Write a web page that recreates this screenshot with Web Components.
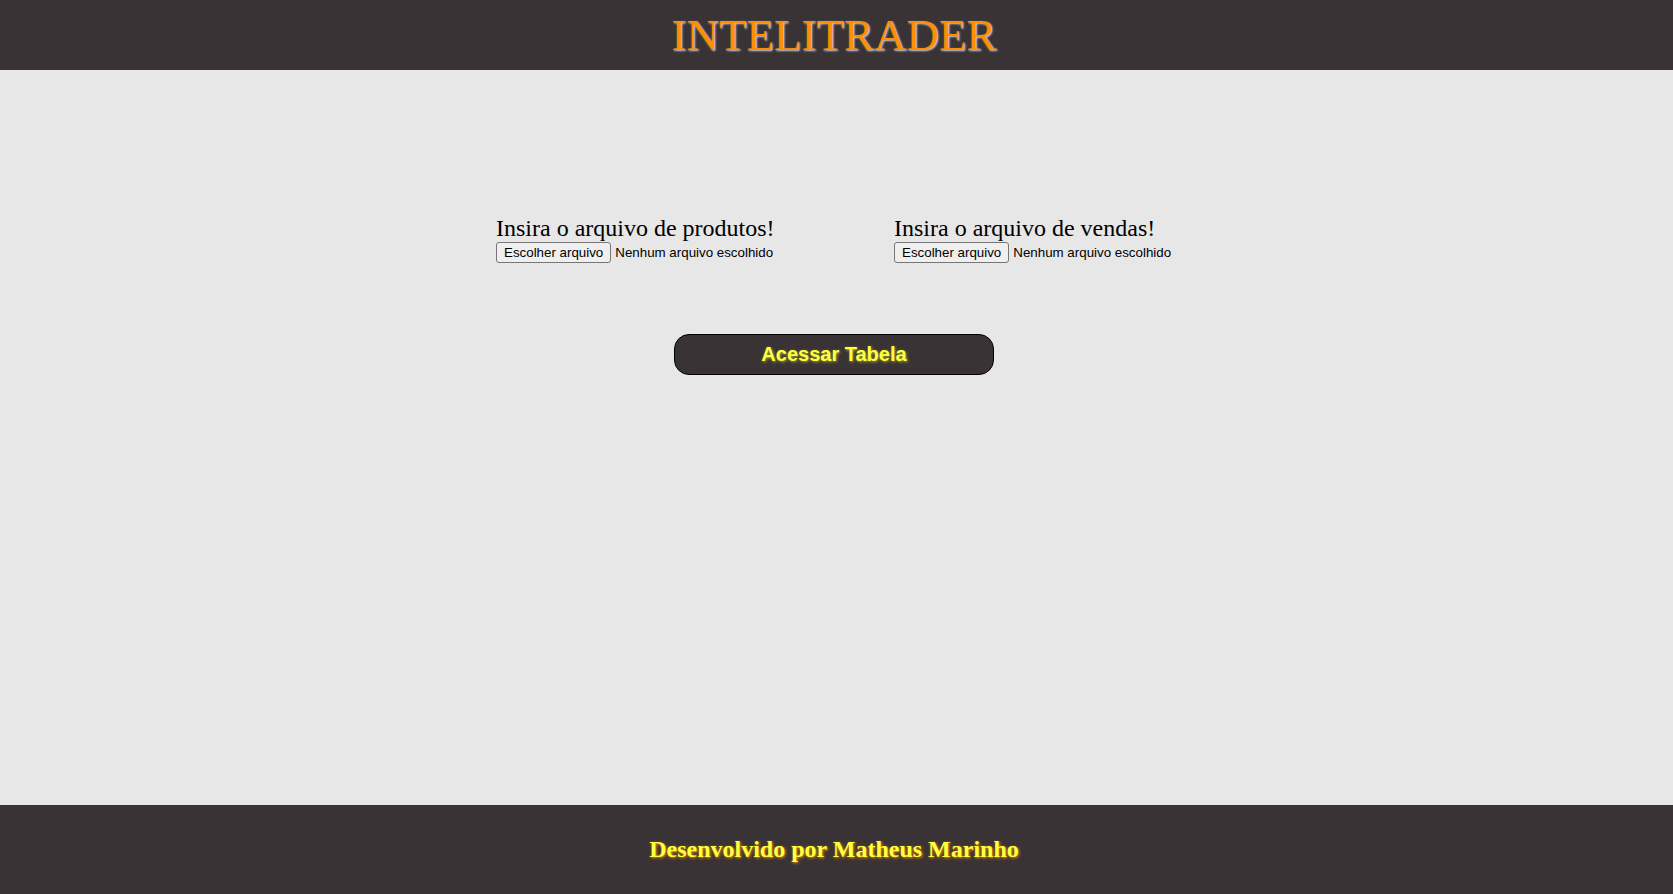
<!DOCTYPE html>
<html lang="pt-BR">
<head>
<meta charset="utf-8">
<meta name="viewport" content="width=device-width, initial-scale=1">
<title>Intelitrader</title>
<style>
  body { margin: 0; font-family: "Liberation Serif", "Times New Roman", serif; color: #000; background: #e7e7e7; --bar: #3a3335; --accent: #fd8f00; --highlight: #ffff3f; --gutter: 5px; }
</style>
</head>
<body>
<trader-page>
  <site-header slot="header">INTELITRADER</site-header>
  <upload-form>
    <file-picker name="produtos">Insira o arquivo de produtos!</file-picker>
    <file-picker name="vendas">Insira o arquivo de vendas!</file-picker>
    <action-button slot="action">Acessar Tabela</action-button>
  </upload-form>
  <site-footer slot="footer">Desenvolvido por Matheus Marinho</site-footer>
</trader-page>

<script>
class BaseElement extends HTMLElement {
  constructor() {
    super();
    this.attachShadow({ mode: "open" }).innerHTML = this.constructor.markup;
  }
}

customElements.define("trader-page", class extends BaseElement {
  static markup = `
    <style>
      :host { display: flex; flex-direction: column; min-height: 100vh; }
      main { flex: 1; padding: 144px var(--gutter) 0 0; }
    </style>
    <slot name="header"></slot>
    <main><slot></slot></main>
    <slot name="footer"></slot>`;
});

customElements.define("site-header", class extends BaseElement {
  static markup = `
    <style>
      :host { display: block; background: var(--bar); }
      header { display: flex; justify-content: center; padding: 10px var(--gutter) 10px 0; }
      h1 { margin: 0; font-size: 45px; line-height: 50px; font-weight: 400; color: var(--accent); text-shadow: 1px 1px 2px #d4d4e4; }
    </style>
    <header><h1><slot></slot></h1></header>`;
});

customElements.define("upload-form", class extends BaseElement {
  static markup = `
    <style>
      :host { display: block; }
      form { display: flex; flex-direction: column; align-items: center; gap: 71px; }
      .files { display: flex; flex-wrap: wrap; justify-content: center; gap: 32px 120px; }
    </style>
    <form>
      <div class="files"><slot></slot></div>
      <slot name="action"></slot>
    </form>`;
});

customElements.define("file-picker", class extends BaseElement {
  static markup = `
    <style>
      :host { display: block; width: 278px; }
      label { display: block; font-size: 24px; line-height: 28px; white-space: nowrap; }
      .row { position: relative; display: flex; align-items: center; gap: 4px; font: 10pt/15px "Liberation Sans", Arial, sans-serif; white-space: nowrap; }
      input { position: absolute; inset: 0; width: 100%; opacity: 0; pointer-events: none; }
      button { box-sizing: border-box; height: 21px; margin: 0; padding: 1px 7px; font: inherit; color: #000; background: #efefef; border: 1px solid #767676; border-radius: 3px; }
    </style>
    <label for="file"><slot></slot></label>
    <div class="row">
      <input id="file" type="file" tabindex="-1">
      <button type="button">Escolher arquivo</button>
      <output for="file">Nenhum arquivo escolhido</output>
    </div>`;
  connectedCallback() {
    const input = this.shadowRoot.querySelector("input");
    input.name = this.getAttribute("name");
    this.shadowRoot.querySelector("button").onclick = () => input.click();
    input.onchange = () => {
      this.shadowRoot.querySelector("output").textContent =
        input.files.length ? input.files[0].name : "Nenhum arquivo escolhido";
    };
  }
});

customElements.define("action-button", class extends BaseElement {
  static markup = `
    <style>
      :host { display: block; width: 320px; max-width: 100%; }
      button { width: 100%; margin: 0; padding: 8px; font: bold 20px/23px "Liberation Sans", Arial, sans-serif; color: var(--highlight); text-shadow: 1px 1px 3px #a8a830; background: var(--bar); border: 1px solid #000; border-radius: 15px; cursor: pointer; }
    </style>
    <button type="button"><slot></slot></button>`;
});

customElements.define("site-footer", class extends BaseElement {
  static markup = `
    <style>
      :host { display: block; background: var(--bar); }
      footer { display: flex; justify-content: center; padding: 30px var(--gutter) 31px 0; }
      p { margin: 0; font-size: 24px; line-height: 28px; font-weight: 700; color: var(--highlight); text-shadow: 1px 1px 3px var(--accent); }
    </style>
    <footer><p><slot></slot></p></footer>`;
});
</script>
</body>
</html>
